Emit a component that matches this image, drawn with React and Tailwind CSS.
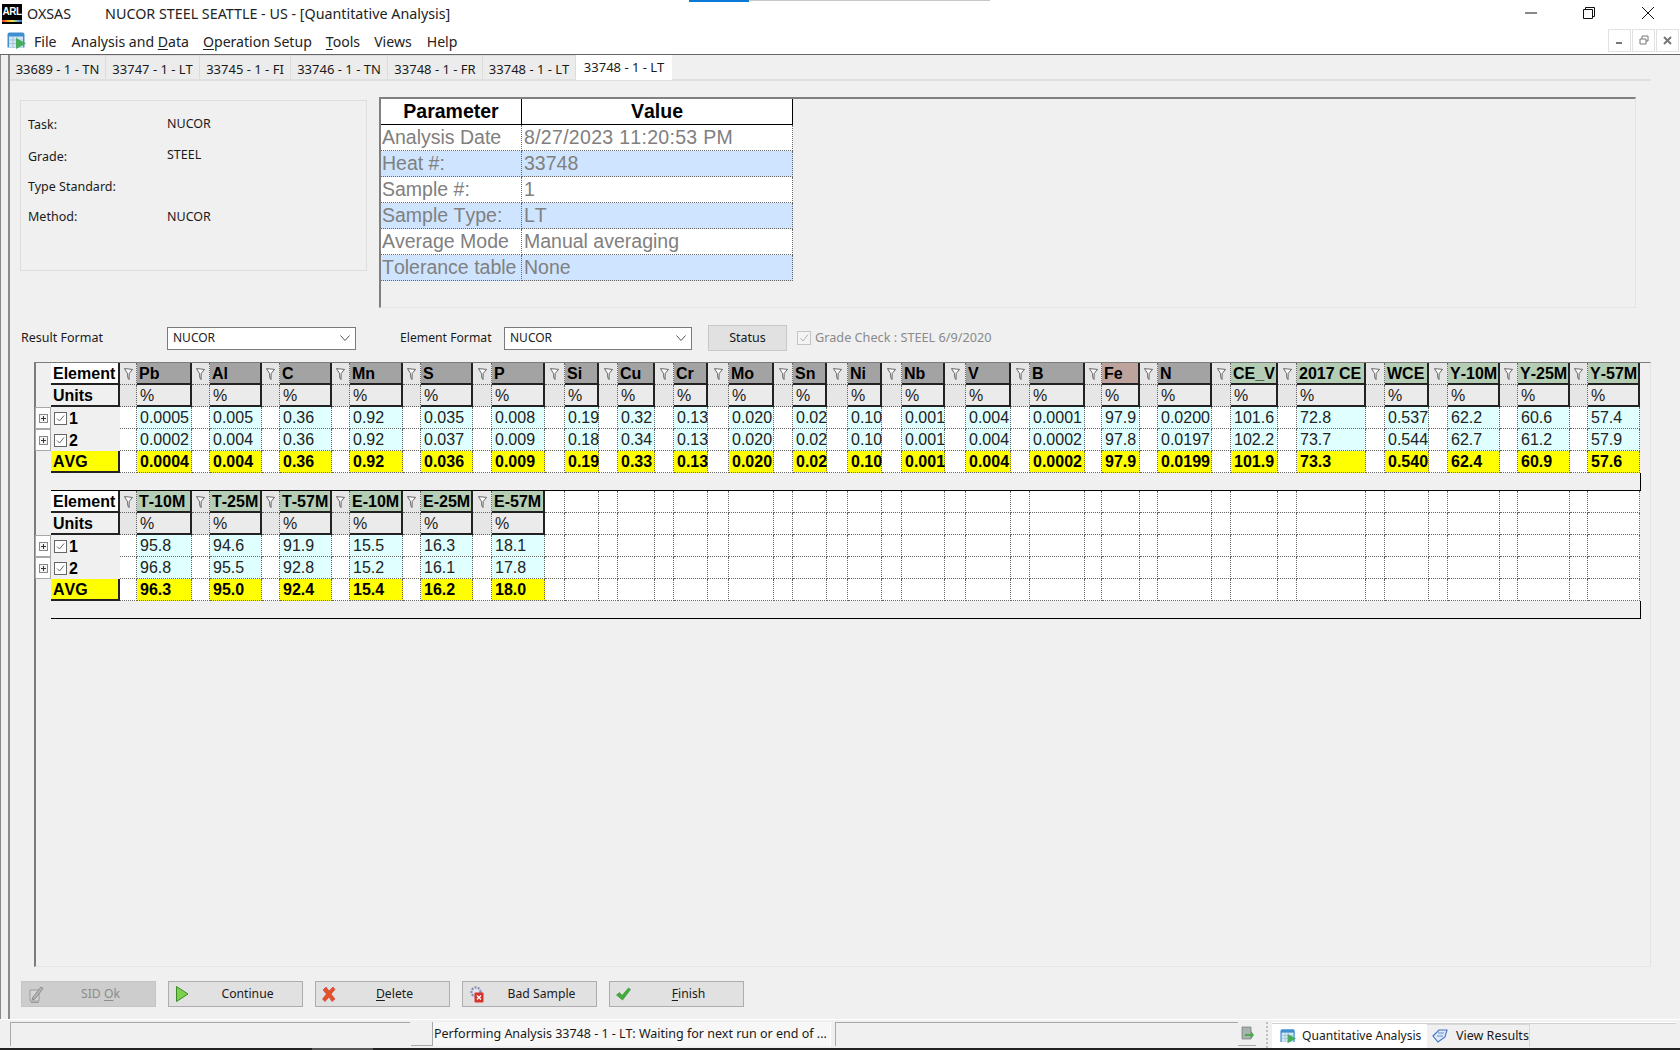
import React from 'react';

const GRID = 'grid grid-cols-[15px_69px_17px_55px_18px_52px_18px_52px_18px_53px_18px_52px_19px_53px_20px_34px_19px_37px_19px_34px_21px_45px_19px_34px_21px_34px_20px_43px_21px_45px_19px_55px_17px_38px_18px_54px_19px_47px_19px_69px_19px_44px_19px_52px_18px_52px_18px_52px] auto-rows-[22px] w-[1605px]';

const top = [
  ['Pb','g','0.0005','0.0002','0.0004'],['Al','g','0.005','0.004','0.004'],['C','g','0.36','0.36','0.36'],
  ['Mn','g','0.92','0.92','0.92'],['S','g','0.035','0.037','0.036'],['P','g','0.008','0.009','0.009'],
  ['Si','g','0.19','0.18','0.19'],['Cu','g','0.32','0.34','0.33'],['Cr','g','0.13','0.13','0.13'],
  ['Mo','g','0.020','0.020','0.020'],['Sn','g','0.02','0.02','0.02'],['Ni','g','0.10','0.10','0.10'],
  ['Nb','g','0.001','0.001','0.001'],['V','g','0.004','0.004','0.004'],['B','g','0.0001','0.0002','0.0002'],
  ['Fe','b','97.9','97.8','97.9'],['N','g','0.0200','0.0197','0.0199'],['CE_V','v','101.6','102.2','101.9'],
  ['2017 CE','v','72.8','73.7','73.3'],['WCE','v','0.537','0.544','0.540'],['Y-10M','v','62.2','62.7','62.4'],
  ['Y-25M','v','60.6','61.2','60.9'],['Y-57M','v','57.4','57.9','57.6'],
];
const bottom = [
  ['T-10M','v','95.8','96.8','96.3'],['T-25M','v','94.6','95.5','95.0'],['T-57M','v','91.9','92.8','92.4'],
  ['E-10M','v','15.5','15.2','15.4'],['E-25M','v','16.3','16.1','16.2'],['E-57M','v','18.1','17.8','18.0'],
];
const headBg = { g: 'bg-[#a3a3a3]', b: 'bg-[#bda39b]', v: 'bg-[#b4cdb4]' };

const Dot = 'border-r border-b border-dotted border-[#666]';

function FilterIcon() {
  return (
    <svg width="9" height="12" viewBox="0 0 9 12" className="mx-auto mt-[5px]">
      <path d="M0.5 0.6 L8.5 1.4 L5.2 5.4 L5 11.5 L3.9 10 L3.5 5.4 Z" fill="#fff" stroke="#444" strokeWidth="0.8" />
    </svg>
  );
}

function Expander() {
  return (
    <div className="border border-[#a8a8a8] bg-white -ml-[1px] flex items-center justify-center">
      <div className="w-[9px] h-[9px] border border-[#888] bg-[#f4f4f4] flex items-center justify-center">
        <svg width="7" height="7" viewBox="0 0 7 7"><path d="M3.5 1V6M1 3.5H6" stroke="#333" strokeWidth="1" /></svg>
      </div>
    </div>
  );
}

function RowHead({ n }) {
  return (
    <div className="bg-[#f0f0f0] flex items-center pl-[3px] font-bold text-[16px] text-black">
      <div className="w-[13px] h-[13px] border border-[#666] bg-white mr-[2px] flex items-center justify-center">
        <svg width="9" height="9" viewBox="0 0 9 9"><path d="M1 4.5L3.5 7L8 1.5" fill="none" stroke="#666" strokeWidth="1" /></svg>
      </div>
      {n}
    </div>
  );
}

function Table({ cols }) {
  const blanks = top.length - cols.length;
  const blank = Array.from({ length: blanks });
  const Empty = () => (
    <>
      <div className={`bg-white ${Dot}`} />
      <div className={`bg-white ${Dot}`} />
    </>
  );
  return (
    <div className={`${GRID} text-[16px] leading-[21px] text-[#222] [font-kerning:none]`}>
      <div className="bg-[#f0f0f0]" />
      <div className="bg-white border-r-2 border-b-2 border-[#222] font-bold text-black pl-[2px]">Element</div>
      {cols.map((c) => (
        <React.Fragment key={c[0]}>
          <div className={`bg-[#e6e6e6] ${Dot}`}><FilterIcon /></div>
          <div className={`${headBg[c[1]]} border-r-2 border-b-2 border-[#222] font-bold text-black pl-[2px] whitespace-nowrap overflow-hidden`}>{c[0]}</div>
        </React.Fragment>
      ))}
      {blank.map((_, i) => <Empty key={i} />)}

      <div className="bg-[#f0f0f0]" />
      <div className="bg-[#f0f0f0] border-r-2 border-b-2 border-[#222] font-bold text-black pl-[2px]">Units</div>
      {cols.map((c) => (
        <React.Fragment key={c[0]}>
          <div className={`bg-[#e6e6e6] ${Dot}`} />
          <div className="bg-[#ebebeb] border-r-2 border-b-2 border-[#222] pl-[3px]">%</div>
        </React.Fragment>
      ))}
      {blank.map((_, i) => <Empty key={i} />)}

      {[2, 3].map((k) => (
        <React.Fragment key={k}>
          <Expander />
          <RowHead n={k - 1} />
          {cols.map((c) => (
            <React.Fragment key={c[0]}>
              <div className={`bg-white ${Dot}`} />
              <div className={`bg-[#e0ffff] pl-[3px] ${Dot}`}>{c[k]}</div>
            </React.Fragment>
          ))}
          {blank.map((_, i) => <Empty key={i} />)}
        </React.Fragment>
      ))}

      <div />
      <div className="bg-[#ffff00] border-r-2 border-b-2 border-[#222] font-bold text-black pl-[2px]">AVG</div>
      {cols.map((c) => (
        <React.Fragment key={c[0]}>
          <div className={`bg-white ${Dot}`} />
          <div className={`bg-[#ffff00] font-bold text-black pl-[3px] ${Dot}`}>{c[4]}</div>
        </React.Fragment>
      ))}
      {blank.map((_, i) => <Empty key={i} />)}
    </div>
  );
}

const Band = () => <div className="ml-[15px] w-[1590px] h-[18px] border-r border-b border-black" />;

const params = [
  ['Analysis Date', '8/27/2023 11:20:53 PM'], ['Heat #:', '33748'], ['Sample #:', '1'],
  ['Sample Type:', 'LT'], ['Average Mode', 'Manual averaging'], ['Tolerance table', 'None'],
];

function Combo({ className }) {
  return (
    <div className={`h-[23px] bg-white border border-[#7a7a7a] flex items-center justify-between pl-[5px] pr-[4px] text-[12px] text-[#222] ${className}`}>
      <span className="-mt-[1px]">NUCOR</span>
      <svg width="12" height="8" viewBox="0 0 12 8"><path d="M1.5 1.5L6 6.5L10.5 1.5" fill="none" stroke="#555" strokeWidth="1" /></svg>
    </div>
  );
}

function Btn({ icon, children, disabled }) {
  return (
    <div className={`relative w-[135px] h-[26px] border flex items-center justify-center pl-[24px] text-[12.2px] ${disabled ? 'bg-[#cdcdcd] text-[#8c8c8c] border-[#c4c4c4]' : 'bg-[#e1e1e1] text-[#1a1a1a] border-[#adadad]'}`}>
      <span className="absolute left-[6px] top-[3px] w-[18px] h-[18px]">{icon}</span>
      <span>{children}</span>
    </div>
  );
}

const U = ({ children }) => <span className="underline underline-offset-2 decoration-1">{children}</span>;

const icons = {
  sid: (
    <svg viewBox="0 0 18 18" width="18" height="18"><path d="M2 5H11V16H2Z" fill="#d6d6d6" stroke="#9a9a9a" /><path d="M5 12L13 2L15 3.5L7 14L4 15Z" fill="#b5b5b5" stroke="#8e8e8e" /><path d="M3 17.5H11" stroke="#9a9a9a" /></svg>
  ),
  play: (
    <svg viewBox="0 0 18 18" width="18" height="18"><path d="M1.5 1.5L13 9L1.5 16.5Z" fill="#7cd04c" stroke="#3a8a2a" strokeWidth="1" /></svg>
  ),
  del: (
    <svg viewBox="0 0 18 18" width="18" height="18"><path d="M1 5L4 2L7 6L11 2L13 4.5L9 9L13 14L10 16.5L7 12L3 16.5L0.5 14L4.5 9Z" fill="#e2532a" stroke="#c33" strokeWidth="0.6" /></svg>
  ),
  bad: (
    <svg viewBox="0 0 18 18" width="18" height="18">
      <circle cx="7" cy="7" r="4.5" fill="#e4e7f2" stroke="#8a90b0" strokeWidth="2.4" strokeDasharray="2 1.2" />
      <rect x="5.5" y="7.5" width="9" height="10" rx="1" fill="#d6332b" />
      <path d="M8 10.5L12 14.5M12 10.5L8 14.5" stroke="#fff" strokeWidth="1.4" />
    </svg>
  ),
  ok: (
    <svg viewBox="0 0 18 18" width="18" height="18"><path d="M0.5 10L3.5 7.5L6 10.5L12.5 3L14.5 4.5L6.5 15Z" fill="#3fae3a" stroke="#2d8a2d" strokeWidth="0.6" /></svg>
  ),
};

const QaIcon = ({ size = 19 }) => (
  <svg viewBox="0 0 19 18" width={size} height={size}>
    <path d="M0.5 3Q0.5 1 2.5 1H15.5Q17.5 1 17.5 3V16H0.5Z" fill="#3f8fd0" />
    <rect x="2" y="5" width="14" height="11" fill="#d6e6f3" />
    <path d="M6 5V16M10 5V16M2 8.5H16M2 12H16" stroke="#8fb8da" strokeWidth="0.7" />
    <path d="M9 6.5L19 12L9 17.5Z" fill="#46ad5a" />
  </svg>
);

export default function App() {
  return (
    <div className="relative w-[1680px] h-[1050px] overflow-hidden flex flex-col bg-[#f0f0f0] [font-family:'Noto_Sans',sans-serif] text-[12.5px] text-[#1a1a1a]">
      <div className="absolute left-[689px] top-0 w-[60px] h-[2px] bg-[#0a78d7]" />
      <div className="absolute left-[749px] top-0 w-[241px] h-[1px] bg-[#c8c8c8]" />

      {/* title bar */}
      <div className="h-[26px] bg-white flex items-center shrink-0 text-[14.3px] text-[#222]">
        <div className="relative ml-[2px] mt-[2px] w-[20px] h-[20px] bg-black overflow-hidden">
          <div className="text-white font-bold text-[10px] leading-[12px] mt-[2px] text-center tracking-[-0.5px] [font-family:'Liberation_Sans',sans-serif]">ARL</div>
          <div className="absolute left-0 right-0 bottom-[2px] h-[2px] bg-gradient-to-r from-[#e23] via-[#ee3] to-[#26e]" />
        </div>
        <span className="ml-[5px] mt-[2px]">OXSAS</span>
        <span className="ml-[34px] mt-[2px]">NUCOR STEEL SEATTLE - US - [Quantitative Analysis]</span>
        <div className="ml-auto flex items-center">
          <svg width="14" height="14" viewBox="0 0 14 14" className="mr-[44px]"><path d="M1 7H13" stroke="#111" strokeWidth="1" /></svg>
          <svg width="14" height="14" viewBox="0 0 14 14" className="mr-[45px]"><path d="M1.5 3.5H10.5V12.5H1.5ZM3.5 3.5V1.5H12.5V10.5H10.5" fill="none" stroke="#111" strokeWidth="1" /></svg>
          <svg width="14" height="14" viewBox="0 0 14 14" className="mr-[25px]"><path d="M1 1L13 13M13 1L1 13" stroke="#111" strokeWidth="1" /></svg>
        </div>
      </div>

      {/* menu bar */}
      <div className="h-[29px] bg-white border-b border-[#666] shrink-0 flex items-center relative text-[14.1px] text-[#222]">
        <span className="ml-[7px] mr-[8px] mt-[1px]"><QaIcon /></span>
        <span className="mt-[3px]">File</span>
        <span className="ml-[15px] mt-[3px]">Analysis and <U>D</U>ata</span>
        <span className="ml-[14px] mt-[3px]"><U>O</U>peration Setup</span>
        <span className="ml-[14px] mt-[3px]"><U>T</U>ools</span>
        <span className="ml-[14px] mt-[3px]">Views</span>
        <span className="ml-[15px] mt-[3px]">Help</span>
        <div className="ml-auto mr-[1px] flex gap-[1px] text-[#777]">
          <div className="w-[23px] h-[23px] border border-[#e2e2e2] flex items-center justify-center">
            <svg width="9" height="9" viewBox="0 0 9 9"><path d="M1 7H7" stroke="#777" strokeWidth="2" /></svg>
          </div>
          <div className="w-[23px] h-[23px] border border-[#e2e2e2] flex items-center justify-center">
            <svg width="10" height="10" viewBox="0 0 10 10"><path d="M1 4H7V9H1ZM3 4V1H9V6H7" fill="none" stroke="#777" strokeWidth="1" /></svg>
          </div>
          <div className="w-[23px] h-[23px] border border-[#e2e2e2] flex items-center justify-center">
            <svg width="9" height="9" viewBox="0 0 9 9"><path d="M1 1L8 8M8 1L1 8" stroke="#777" strokeWidth="2" /></svg>
          </div>
        </div>
      </div>

      {/* MDI body */}
      <div className="flex-1 min-h-0 border-l border-[#888]">
        <div className="ml-[7px] h-full border-l-2 border-[#8a8a8a] flex flex-col">
          {/* tabs */}
          <div className="h-[26px] w-[1641px] border-b-2 border-[#e0e0e0] flex items-stretch text-[13px] shrink-0">
            {[['33689 - 1 - TN', 'w-[96px]'], ['33747 - 1 - LT', 'w-[94px]'], ['33745 - 1 - FI', 'w-[91px]'], ['33746 - 1 - TN', 'w-[97px]'], ['33748 - 1 - FR', 'w-[95px]'], ['33748 - 1 - LT', 'w-[93px]']].map(([t, w]) => (
              <div key={t + w} className={`${w} bg-[#ececec] border-r border-t border-[#dcdcdc] flex items-center justify-center whitespace-nowrap pt-[4px]`}>{t}</div>
            ))}
            <div className="w-[96px] h-[26px] bg-white flex items-center justify-center whitespace-nowrap -mt-[1px] pt-[1px]">33748 - 1 - LT</div>
          </div>

          {/* top section */}
          <div className="flex items-start mt-[16px] ml-[10px] shrink-0">
            <div className="w-[347px] h-[171px] mt-[3px] border border-[#dedede] pt-[14px] pl-[7px]">
              {[['Task:', 'NUCOR', 'mt-0', '-mt-[2px]'], ['Grade:', 'STEEL', 'mt-[12px]', '-mt-[4px]'], ['Type Standard:', '', 'mt-[10px]', ''], ['Method:', 'NUCOR', 'mt-[10px]', '']].map(([a, b, m, v]) => (
                <div key={a} className={`flex h-[20px] items-center ${m}`}>
                  <span className="w-[139px]">{a}</span>
                  <span className={v}>{b}</span>
                </div>
              ))}
            </div>
            <div className="ml-[12px] w-[1257px] h-[211px] border-t-2 border-l-2 border-[#808080] border-r border-b border-r-[#e4e4e4] border-b-[#e4e4e4]">
              <div className="grid grid-cols-[141px_271px] w-[412px] [font-family:'Liberation_Sans',sans-serif] text-[19.5px] leading-[25px] [font-kerning:none]">
                <div className="h-[26px] bg-white border-r border-b border-black font-bold text-black text-center">Parameter</div>
                <div className="h-[26px] bg-white border-r border-b border-black font-bold text-black text-center">Value</div>
                {params.map(([a, b], i) => (
                  <React.Fragment key={a}>
                    <div className={`h-[26px] pl-[1px] whitespace-nowrap text-[#808080] ${Dot} ${i % 2 ? 'bg-[#cfe5ff]' : 'bg-white'}`}>{a}</div>
                    <div className={`h-[26px] pl-[2px] text-[#808080] ${Dot} ${i % 2 ? 'bg-[#cfe5ff]' : 'bg-white'} ${i === 0 ? 'tracking-[0.3px]' : ''}`}>{b}</div>
                  </React.Fragment>
                ))}
              </div>
            </div>
          </div>

          {/* controls */}
          <div className="flex items-center h-[26px] mt-[17px] ml-[11px] shrink-0">
            <span className="w-[146px]">Result Format</span>
            <Combo className="w-[189px]" />
            <span className="ml-[44px] w-[104px] text-[12.2px]">Element Format</span>
            <Combo className="w-[188px]" />
            <div className="ml-[16px] w-[79px] h-[26px] bg-[#e1e1e1] border border-[#c8c8c8] flex items-center justify-center">Status</div>
            <div className="ml-[10px] w-[14px] h-[14px] border border-[#c4c4c4] bg-[#f4f4f4] flex items-center justify-center">
              <svg width="10" height="10" viewBox="0 0 10 10"><path d="M1.5 5L4 8L9 1.5" fill="none" stroke="#b0b0b0" strokeWidth="1" /></svg>
            </div>
            <span className="ml-[4px] text-[12.7px] text-[#8a8a8a]">Grade Check : STEEL 6/9/2020</span>
          </div>

          {/* grid frame */}
          <div className="ml-[24px] mt-[11px] w-[1617px] h-[605px] border-t border-l-2 border-[#7c7c7c] border-r border-b border-r-[#e4e4e4] border-b-[#e4e4e4] shrink-0 [font-family:'Liberation_Sans',sans-serif]">
            <Table cols={top} />
            <Band />
            <Table cols={bottom} />
            <Band />
          </div>

          {/* buttons */}
          <div className="flex gap-[12px] mt-[14px] ml-[11px] shrink-0">
            <Btn disabled icon={icons.sid}>SID <U>O</U>k</Btn>
            <Btn icon={icons.play}>Continue</Btn>
            <Btn icon={icons.del}><U>D</U>elete</Btn>
            <Btn icon={icons.bad}>Bad Sample</Btn>
            <Btn icon={icons.ok}><U>F</U>inish</Btn>
          </div>
        </div>
      </div>

      {/* status bar */}
      <div className="h-[29px] shrink-0 border-t border-white flex items-stretch pt-[2px] relative">
        <div className="ml-[10px] w-[400px] h-[24px] border-t border-l border-[#a8a8a8] bg-[#f0f0f0]" />
        <div className="w-[22px] h-[24px] border-r border-b border-[#a8a8a8] ml-[1px]" />
        <div className="w-[398px] h-[24px] bg-[#f7f7f7] border-r border-white flex items-center pl-[1px] whitespace-nowrap">Performing Analysis 33748 - 1 - LT: Waiting for next run or end of ...</div>
        <div className="ml-[4px] w-[403px] h-[24px] border-t border-l border-[#a8a8a8]" />
        <div className="w-[18px] h-[24px] border-b border-[#a8a8a8] flex items-center justify-center">
          <svg width="14" height="16" viewBox="0 0 14 16"><path d="M2 1H11V13H2Z" fill="#a9b3ad" stroke="#6c7a70" strokeWidth="0.7" /><path d="M5 8L11 8V5L14 9L11 13V10H5Z" fill="#45ad4a" /></svg>
        </div>
        <div className="ml-[10px] w-[2px] h-[26px] border-l-2 border-dotted border-[#c0c0c0]" />
        <div className="ml-[4px] w-[404px] flex flex-col">
          <div className="h-[2px] border-b border-[#cfcfcf] bg-white" />
          <div className="flex flex-1 items-stretch">
            <div className="w-[155px] bg-white flex items-center pl-[8px] gap-[6px] whitespace-nowrap text-[12.1px]">
              <QaIcon size={16} />
              <span>Quantitative Analysis</span>
            </div>
            <div className="w-[103px] mt-[1px] border-t border-r border-[#d8d8d8] bg-[#f0f0f0] flex items-center pl-[4px] gap-[7px] -translate-y-[1px] whitespace-nowrap">
              <svg width="18" height="14" viewBox="0 0 16 14"><path d="M1 7L7 1H15L13 8L6 13Z" fill="#dfe9f7" stroke="#3f74c4" strokeWidth="1.1" /><path d="M6 4H12M5 7H11" stroke="#3f74c4" strokeWidth="0.8" /></svg>
              <span>View Results</span>
            </div>
          </div>
        </div>
      </div>
      <div className="h-[2px] shrink-0 bg-[#222] relative">
        <div className="absolute left-[312px] w-[61px] h-[2px] bg-[#555]" />
      </div>
    </div>
  );
}
